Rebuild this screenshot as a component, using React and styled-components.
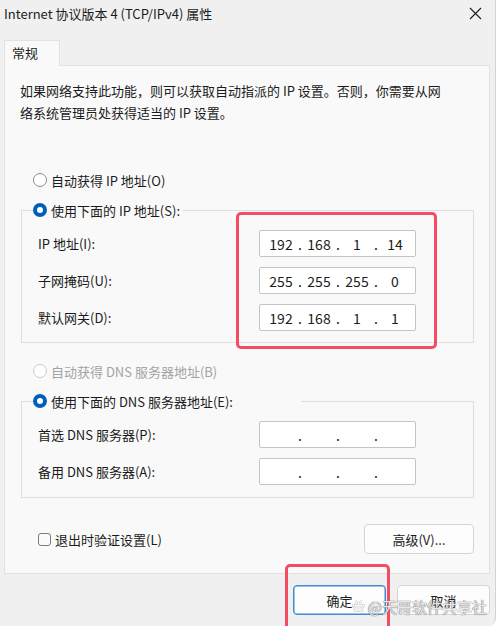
import React from 'react'
import styled, { createGlobalStyle } from 'styled-components'
import { FaPaw } from 'react-icons/fa'

const GlobalStyle = createGlobalStyle`
    html, body {
        margin: 0;
        padding: 0;
        background: #ffffff;
    }
    body {
        font-family: "Noto Sans CJK SC", "Noto Sans", sans-serif;
        font-size: 13px;
        color: #1b1b1b;
    }
`

const Frame = styled.div`
    position: relative;
    width: 496px;
    height: 626px;
    background: #f0f0f0;
    border-right: 1px solid #d3d3d3;
    border-bottom-right-radius: 8px;
    overflow: hidden;
    display: flex;
    flex-direction: column;
    box-sizing: border-box;
`

const TitleBar = styled.div`
    height: 27px;
    padding: 0 10px 0 4px;
    display: flex;
    align-items: center;
    justify-content: space-between;
    font-size: 13px;
    line-height: 27px;
`

const CloseButton = styled.span`
    display: flex;
    align-items: center;
    justify-content: center;
    width: 14px;
    height: 14px;
    margin-right: 3px;
`

const Body = styled.div`
    padding: 13px 0 0 4px;
    display: flex;
    flex-direction: column;
`

const TabStrip = styled.div`
    display: flex;
`

const Tab = styled.div`
    width: 47px;
    height: 25px;
    padding-left: 7px;
    background: #f9f9f9;
    border: 1px solid #e2e2e2;
    border-bottom: none;
    line-height: 24px;
    font-size: 13px;
    margin-bottom: -1px;
    position: relative;
    z-index: 1;
`

const Panel = styled.div`
    width: 486px;
    height: 509px;
    box-sizing: border-box;
    background: #f9f9f9;
    border: 1px solid #e2e2e2;
    padding: 14px 15px 0 16px;
    display: flex;
    flex-direction: column;
`

const Description = styled.p`
    margin: 0 0 0 -1px;
    line-height: 22px;
    font-size: 13px;
`

const Choice = styled.label`
    display: flex;
    align-items: center;
    gap: 4px;
    height: 20px;
    padding-left: ${p => p.$indent ?? 12}px;
    margin-top: ${p => p.$top ?? 0}px;
    color: ${p => (p.$disabled ? '#a3a3a3' : '#1b1b1b')};
    font-size: 13px;
    white-space: nowrap;
`

const Dot = styled.span`
    width: 14px;
    height: 14px;
    box-sizing: border-box;
    border-radius: 50%;
    flex-shrink: 0;
    background: #ffffff;
    border: ${p =>
        p.$checked
            ? '4px solid #005fb8'
            : `1px solid ${p.$disabled ? '#cbcbcb' : '#8a8a8a'}`};
`

const Group = styled.fieldset`
    margin: 10px 0 0 0;
    padding: 10px 0 ${p => p.$bottom}px 16px;
    border: 1px solid #dedede;
    min-width: 0;
    display: grid;
    grid-template-columns: 221px 157px;
`

// the legend sits after the group's left padding, so pull it back
const Legend = styled.legend`
    margin-left: -5px;
    padding: 0 3px 0 0;
    width: ${p => (p.$span ? `${p.$span}px` : 'auto')};
    box-sizing: border-box;
`

const Column = styled.div`
    display: flex;
    flex-direction: column;
    gap: 10px;
`

const FieldLabel = styled.div`
    height: 27px;
    line-height: 27px;
    font-size: 13px;
`

// red annotation frame drawn around a block
const Marked = styled.div`
    position: relative;
    &::after {
        content: '';
        position: absolute;
        inset: ${p => p.$inset};
        border: 3px solid #f24d63;
        border-radius: 5px;
        pointer-events: none;
    }
`

const AddressBox = styled.div`
    width: 157px;
    height: 27px;
    box-sizing: border-box;
    background: #ffffff;
    border: 1px solid #c4c4c4;
    border-radius: 2px;
    padding-left: 4px;
    display: flex;
    align-items: center;
    font-size: 14px;
`

const Octet = styled.span`
    width: 34px;
    text-align: center;
`

const Sep = styled.span`
    width: 4px;
    text-align: center;
`

const Bottom = styled.div`
    margin-top: 26px;
    display: flex;
    align-items: center;
    justify-content: space-between;
`

const Check = styled.span`
    width: 13px;
    height: 13px;
    box-sizing: border-box;
    border: 1px solid #7a7a7a;
    border-radius: 3px;
    background: #fbfbfb;
`

const Button = styled.button`
    width: ${p => p.$w}px;
    height: 30px;
    background: #fdfdfd;
    border: 1px solid ${p => (p.$primary ? '#3d8ad6' : '#d4d4d4')};
    box-shadow: ${p => (p.$primary ? 'inset 0 0 0 0.5px #3d8ad6' : 'none')};
    border-radius: 4px;
    font-family: inherit;
    font-size: 13px;
    color: #1b1b1b;
    padding: 0;
`

const Footer = styled.div`
    margin-top: 11px;
    padding-right: 5px;
    display: flex;
    justify-content: flex-end;
    gap: 11px;
`

const Watermark = styled.div`
    position: absolute;
    right: 8px;
    bottom: 9px;
    display: flex;
    align-items: center;
    gap: 3px;
    font-size: 15px;
    color: rgba(255, 255, 255, 0.85);
    text-shadow: 0 0 1px #6a6a6a, 0 0 1px #6a6a6a;
    svg {
        color: rgba(255, 255, 255, 0.9);
        filter: drop-shadow(0 0 0.6px #555);
    }
`

const Address = ({ parts }) => (
    <AddressBox>
        {parts.map((part, i) => (
            <React.Fragment key={i}>
                {i > 0 && <Sep>.</Sep>}
                <Octet>{part}</Octet>
            </React.Fragment>
        ))}
    </AddressBox>
)

const empty = ['', '', '', '']

const App = () => {
    return (
        <>
            <GlobalStyle />
            <Frame>
                <TitleBar>
                    <span>Internet 协议版本 4 (TCP/IPv4) 属性</span>
                    <CloseButton>
                        <svg width="13" height="13" viewBox="0 0 13 13">
                            <path d="M1 1 L12 12 M12 1 L1 12" stroke="#1b1b1b" strokeWidth="1.1" />
                        </svg>
                    </CloseButton>
                </TitleBar>

                <Body>
                    <TabStrip>
                        <Tab>常规</Tab>
                    </TabStrip>
                    <Panel>
                        <Description>
                            如果网络支持此功能，则可以获取自动指派的 IP 设置。否则，你需要从网
                            <br />
                            络系统管理员处获得适当的 IP 设置。
                        </Description>

                        <Choice $top={46}>
                            <Dot />
                            自动获得 IP 地址(O)
                        </Choice>

                        <Group $bottom={11}>
                            <Legend>
                                <Choice $indent={0}>
                                    <Dot $checked />
                                    使用下面的 IP 地址(S):
                                </Choice>
                            </Legend>
                            <Column>
                                <FieldLabel>IP 地址(I):</FieldLabel>
                                <FieldLabel>子网掩码(U):</FieldLabel>
                                <FieldLabel>默认网关(D):</FieldLabel>
                            </Column>
                            <Marked $inset="-18px -21px -18px -23px">
                                <Column>
                                    <Address parts={['192', '168', '1', '14']} />
                                    <Address parts={['255', '255', '255', '0']} />
                                    <Address parts={['192', '168', '1', '1']} />
                                </Column>
                            </Marked>
                        </Group>

                        <Choice $top={18} $disabled>
                            <Dot $disabled />
                            自动获得 DNS 服务器地址(B)
                        </Choice>

                        <Group $bottom={12}>
                            <Legend $span={268}>
                                <Choice $indent={0}>
                                    <Dot $checked />
                                    使用下面的 DNS 服务器地址(E):
                                </Choice>
                            </Legend>
                            <Column>
                                <FieldLabel>首选 DNS 服务器(P):</FieldLabel>
                                <FieldLabel>备用 DNS 服务器(A):</FieldLabel>
                            </Column>
                            <Column>
                                <Address parts={empty} />
                                <Address parts={empty} />
                            </Column>
                        </Group>

                        <Bottom>
                            <Choice $indent={17}>
                                <Check />
                                退出时验证设置(L)
                            </Choice>
                            <Button $w={110}>高级(V)...</Button>
                        </Bottom>
                    </Panel>

                    <Footer>
                        <Marked $inset="-21px -4px -30px -8px">
                            <Button $w={93} $primary>确定</Button>
                        </Marked>
                        <Button $w={93}>取消</Button>
                    </Footer>
                </Body>

                <Watermark>
                    <FaPaw size={13} />
                    <span>@天哥软件共享社</span>
                </Watermark>
            </Frame>
        </>
    )
}

export default App
